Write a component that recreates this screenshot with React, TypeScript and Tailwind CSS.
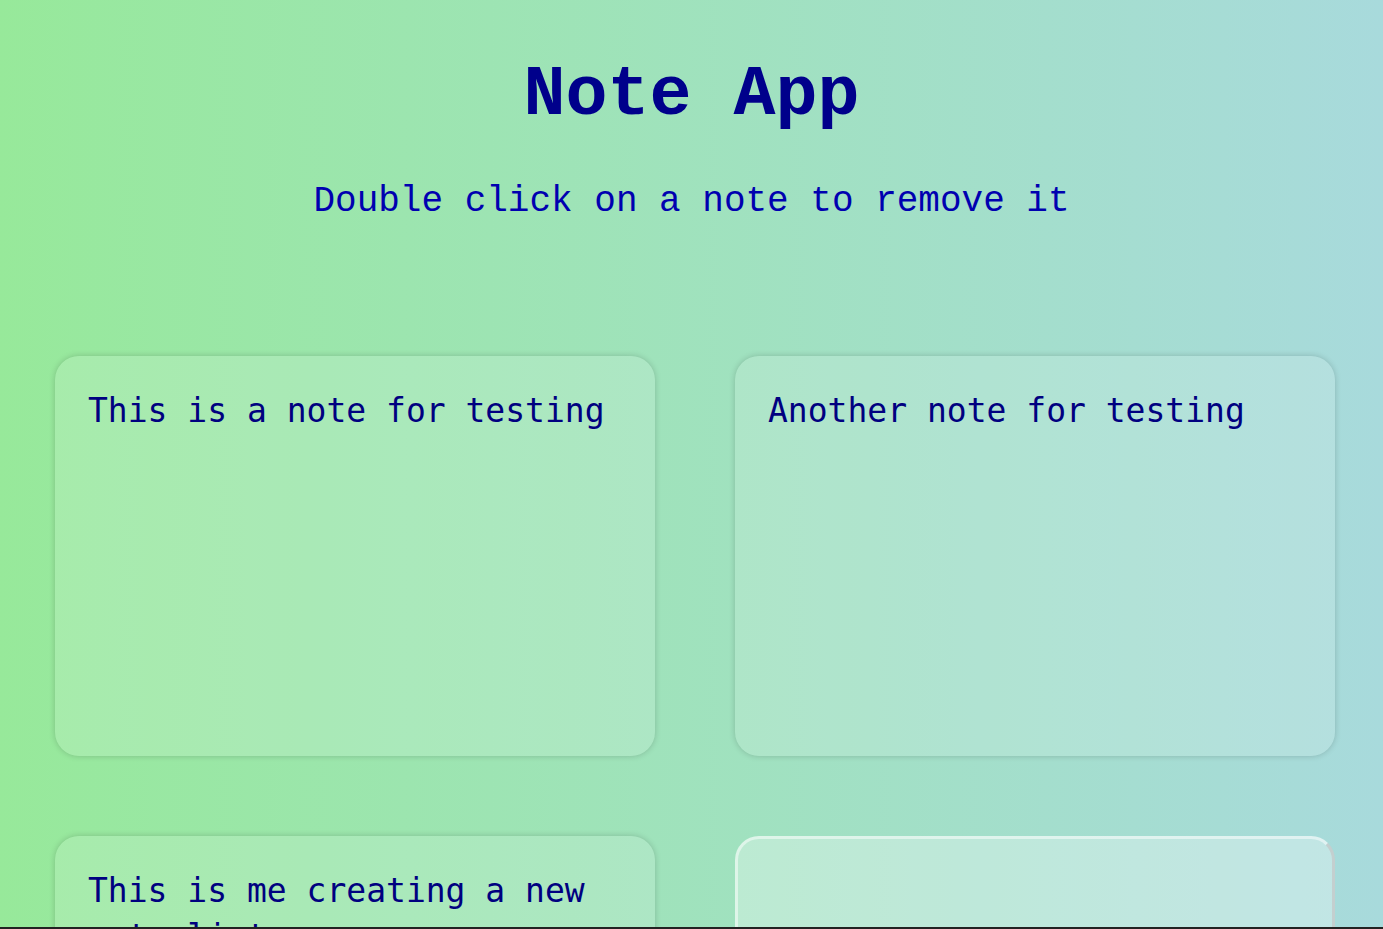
const NOTES = [
  "This is a note for testing",
  "Another note for testing",
  "This is me creating a new note list",
];

const CARD_CLASS =
  "h-[400px] w-[600px] rounded-[24px] bg-white/15 px-[33px] pt-[32px] pb-[34px] shadow-[0_0_6px_rgba(0,0,0,0.18)]";

export default function App() {
  return (
    <div className="relative min-h-[929px] w-full overflow-hidden bg-gradient-to-r from-[#97e99a] to-[#a8dadc]">
      <header className="flex flex-col items-center pt-[58px]">
        <h1 className="font-['Liberation_Mono','Courier_New',monospace] text-[70px] leading-[76px] font-bold text-[#00008b]">
          Note App
        </h1>
        <p className="mt-[48px] font-['Liberation_Mono','Courier_New',monospace] text-[36px] leading-[40px] text-[#0000b0]">
          Double click on a note to remove it
        </p>
      </header>

      <main className="grid grid-cols-[600px_600px] gap-[80px] pl-[55px] pt-[134px] pb-10">
        {NOTES.map((note) => (
          <div key={note} className={CARD_CLASS}>
            <p className="font-['DejaVu_Sans_Mono',monospace] text-[33px] leading-[46px] text-[#000080]">
              {note}
            </p>
          </div>
        ))}
        <textarea
          className="h-[400px] w-[600px] resize-none rounded-[24px] border-[3px] border-t-white/50 border-l-white/50 border-r-[#c3cfcf] border-b-[#c3cfcf] bg-white/30 px-[33px] py-[34px] font-['DejaVu_Sans_Mono',monospace] text-[33px] text-[#000080] outline-none"
          defaultValue=""
        />
      </main>

      <div className="fixed bottom-0 left-0 h-[2px] w-full bg-[#222222]" />
    </div>
  );
}
